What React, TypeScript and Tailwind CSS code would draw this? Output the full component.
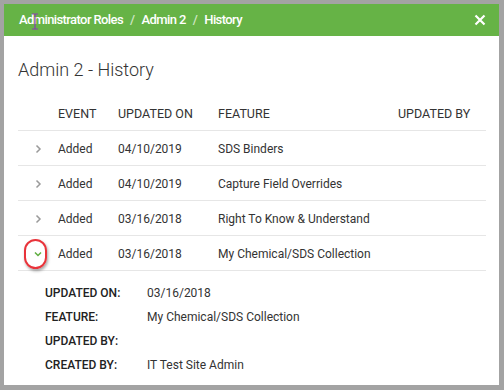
import React from "react";

const rows = [
  { event: "Added", date: "04/10/2019", feature: "SDS Binders" },
  { event: "Added", date: "04/10/2019", feature: "Capture Field Overrides" },
  { event: "Added", date: "03/16/2018", feature: "Right To Know & Understand" },
  { event: "Added", date: "03/16/2018", feature: "My Chemical/SDS Collection", open: true },
];

const details = [
  ["UPDATED ON:", "03/16/2018"],
  ["FEATURE:", "My Chemical/SDS Collection"],
  ["UPDATED BY:", ""],
  ["CREATED BY:", "IT Test Site Admin"],
];

function Chevron({ open }: { open?: boolean }) {
  if (open) {
    return (
      <svg width="10" height="10" viewBox="0 0 10 10">
        <path d="M2 3.5 L5 6.5 L8 3.5" fill="none" stroke="#5fae3f" strokeWidth="1.5" />
      </svg>
    );
  }
  return (
    <svg width="10" height="10" viewBox="0 0 10 10">
      <path d="M3.5 1.5 L7 5 L3.5 8.5" fill="none" stroke="#9a9a9a" strokeWidth="1.5" />
    </svg>
  );
}

export default function App() {
  return (
    <div className="w-[504px] h-[390px] bg-[#a3a3a3] pt-[4px] pl-[4px] pr-[5px] pb-[5px]" style={{ fontFamily: "Roboto, 'Liberation Sans', sans-serif" }}>
      <div className="w-full h-full bg-white flex flex-col">
        <div className="h-[32px] bg-[#66b346] flex items-center justify-between pl-[15px] pr-[13px] text-white relative">
          <div className="flex items-center text-[13px] font-medium tracking-[-0.6px]">
            <span>Administrator Roles</span>
            <span className="mx-[7px] text-[#cfe6c4]">/</span>
            <span>Admin 2</span>
            <span className="mx-[7px] text-[#cfe6c4]">/</span>
            <span>History</span>
          </div>
          <svg width="12" height="12" viewBox="0 0 12 12">
            <path d="M1.5 1.5 L10.5 10.5 M10.5 1.5 L1.5 10.5" stroke="white" strokeWidth="2.2" />
          </svg>
          <svg className="absolute left-[27px] top-[9px]" width="8" height="17" viewBox="0 0 8 17">
            <path d="M1 1 H7 M4 1 V16 M1 16 H7" stroke="#8a3fb0" strokeWidth="1.2" fill="none" />
          </svg>
        </div>
        <div className="pl-[14px] pr-[13px]">
          <div className="mt-[22px] text-[18px] font-light text-[#333] leading-[24px]">Admin 2 - History</div>
          <div className="mt-[13px] h-[36px] pt-[3px] flex items-center text-[12.5px] text-[#333] border-b border-[#e6e6e6]">
            <div className="w-[40px]" />
            <div className="w-[60px]">EVENT</div>
            <div className="w-[100px]">UPDATED ON</div>
            <div className="w-[180px]">FEATURE</div>
            <div>UPDATED BY</div>
          </div>
          {rows.map((r, i) => (
            <div key={i} className="h-[35px] pt-[2px] flex items-center text-[12px] text-[#333] border-b border-[#e6e6e6]">
              <div className="w-[40px] flex justify-center relative">
                <Chevron open={r.open} />
                {r.open && (
                  <div className="absolute left-[6px] top-[-10px] w-[23px] h-[30px] rounded-full border-[2.5px] border-[#e8333a] shadow-[1px_2px_3px_rgba(0,0,0,0.35)]" />
                )}
              </div>
              <div className="w-[60px]">{r.event}</div>
              <div className="w-[100px]">{r.date}</div>
              <div className="w-[180px]">{r.feature}</div>
              <div />
            </div>
          ))}
          <div className="pt-[10px] pl-[27px] flex flex-col">
            {details.map(([k, v]) => (
              <div key={k} className="h-[24px] flex items-center text-[12px] text-[#222]">
                <div className="w-[102px] font-medium">{k}</div>
                <div className="text-[#333]">{v}</div>
              </div>
            ))}
          </div>
        </div>
      </div>
    </div>
  );
}
